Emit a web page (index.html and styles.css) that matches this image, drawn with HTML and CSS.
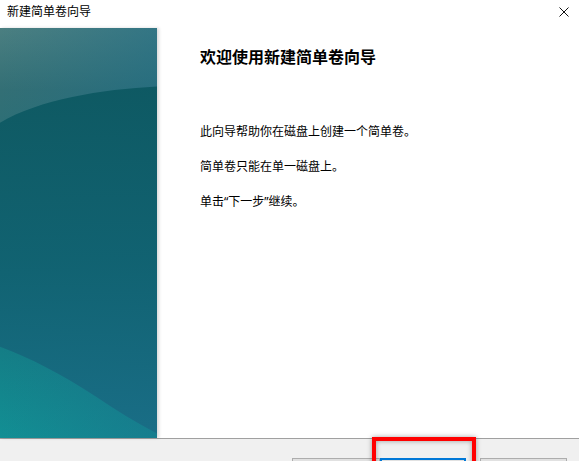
FILE: index.html
```html
<!DOCTYPE html>
<html lang="zh-CN">
<head>
  <meta charset="UTF-8">
  <title>新建简单卷向导</title>
  <link rel="stylesheet" href="styles.css">
</head>
<body>
  <!-- Barra de titulo -->
  <div class="titlebar">
    <span class="title">新建简单卷向导</span>
    <svg class="close" width="10" height="10" viewBox="0 0 10 10">
      <path d="M0.5 0.5 L9.5 9.5 M9.5 0.5 L0.5 9.5" stroke="#111" stroke-width="1"/>
    </svg>
  </div>

  <!-- Contenido: banner + texto -->
  <div class="content">
    <div class="banner">
      <svg width="157" height="410" viewBox="0 0 157 410" preserveAspectRatio="none">
        <defs>
          <linearGradient id="base" x1="0" y1="0" x2="0" y2="1">
            <stop offset="0" stop-color="#4b7f81"/>
            <stop offset="0.15" stop-color="#336f75"/>
            <stop offset="0.6" stop-color="#166f7a"/>
            <stop offset="1" stop-color="#128f94"/>
          </linearGradient>
          <linearGradient id="tint" x1="0" y1="0" x2="1" y2="0">
            <stop offset="0" stop-color="#1b6c88" stop-opacity="0"/>
            <stop offset="1" stop-color="#1b6c88" stop-opacity="0.9"/>
          </linearGradient>
          <linearGradient id="orb" x1="0" y1="0" x2="0" y2="1">
            <stop offset="0" stop-color="#0b5760"/>
            <stop offset="0.5" stop-color="#106170"/>
            <stop offset="1" stop-color="#1a6c86"/>
          </linearGradient>
        </defs>
        <rect width="157" height="410" fill="url(#base)"/>
        <rect width="157" height="410" fill="url(#tint)" opacity="0.55"/>
        <path d="M170 58 C110 60 40 70 -2 96 L-2 318 C30 330 60 345 95 368 C120 385 145 400 170 412 Z" fill="url(#orb)" opacity="0.9"/>
      </svg>
    </div>
    <div class="main">
      <h1>欢迎使用新建简单卷向导</h1>
      <p class="first">此向导帮助你在磁盘上创建一个简单卷。</p>
      <p>简单卷只能在单一磁盘上。</p>
      <p>单击“下一步”继续。</p>
    </div>
  </div>

  <!-- Botones inferiores (solo se ve el borde superior) -->
  <div class="footer">
    <button class="btn back" aria-label="上一步"></button>
    <button class="btn next" aria-label="下一步"></button>
    <button class="btn cancel" aria-label="取消"></button>
  </div>

  <!-- Marca roja sobre el boton siguiente -->
  <div class="highlight"></div>
</body>
</html>
```

FILE: styles.css
```css
/* Ventana general */
html, body {
  margin: 0;
  height: 461px;
  overflow: hidden;
}

body {
  position: relative;
  background: #fff;
  font-family: "Noto Sans", "Noto Sans CJK SC", sans-serif;
  color: #000;
}

/* Barra de titulo */
.titlebar {
  height: 28px;
  display: flex;
  justify-content: space-between;
  align-items: flex-start;
}

.title {
  font-size: 12px;
  line-height: 16px;
  padding: 4px 0 0 7px;
}

.close {
  margin: 7px 10px 0 0;
}

/* Zona central */
.content {
  display: flex;
  height: 410px;
}

.banner {
  width: 157px;
  flex: none;
  box-shadow: 2px 0 3px rgba(0, 0, 0, 0.15);
}

.banner svg {
  display: block;
}

.main {
  padding: 19px 0 0 43px;
}

.main h1 {
  font-size: 16px;
  line-height: 20px;
  font-weight: bold;
  margin: 0;
}

.main p {
  font-size: 12px;
  line-height: 16px;
  margin: 19px 0 0;
}

.main p.first {
  margin-top: 57px;
}

/* Pie con botones */
.footer {
  border-top: 1px solid #a0a0a0;
  background: #f0f0f0;
  height: 22px;
  display: flex;
  justify-content: flex-end;
  align-items: flex-start;
  padding: 19px 12px 0 0;
}

.btn {
  height: 23px;
  box-sizing: border-box;
  background: #e1e1e1;
  border: 1px solid #adadad;
  padding: 0;
  flex: none;
}

.back {
  width: 88px;
}

.next {
  width: 86px;
  border: 2px solid #0078d7;
  margin-right: 14px;
}

.cancel {
  width: 87px;
}

/* Recuadro rojo de anotacion */
.highlight {
  position: absolute;
  left: 372px;
  top: 437px;
  width: 104px;
  height: 40px;
  box-sizing: border-box;
  border: 4px solid #ff0000;
  box-shadow: 0 0 5px rgba(0, 0, 0, 0.35), inset 0 0 5px rgba(0, 0, 0, 0.35);
}
```
